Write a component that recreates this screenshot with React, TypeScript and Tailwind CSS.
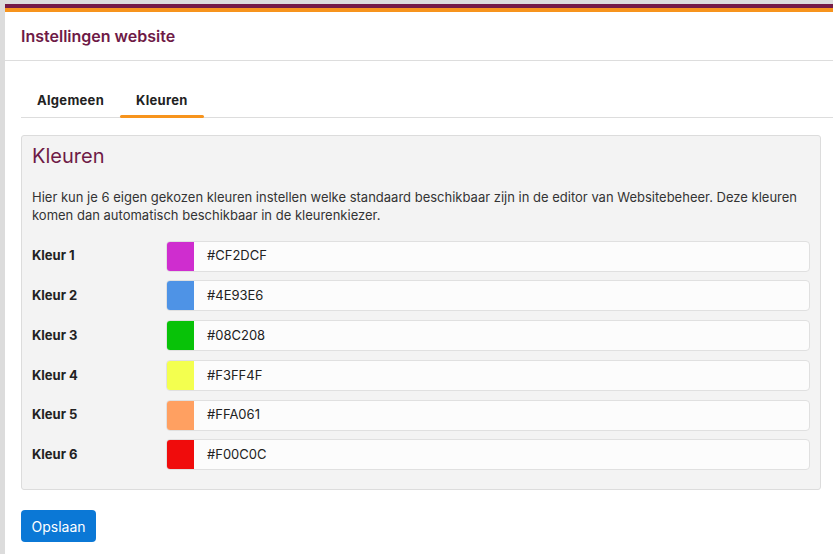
const colors = [
  { label: "Kleur 1", hex: "#CF2DCF" },
  { label: "Kleur 2", hex: "#4E93E6" },
  { label: "Kleur 3", hex: "#08C208" },
  { label: "Kleur 4", hex: "#F3FF4F" },
  { label: "Kleur 5", hex: "#FFA061" },
  { label: "Kleur 6", hex: "#F00C0C" },
];

export default function App() {
  return (
    <div className="min-h-[554px] bg-[#dcdcdc] pt-[4px] pl-[5px] font-['Inter','Noto_Sans',sans-serif] text-[#222]">
      <div className="min-h-[550px] bg-white">
        {/* ─── Top bars ─── */}
        <div className="h-[4px] bg-[#751a47]" />
        <div className="h-[4px] bg-[#f7941d]" />

        {/* ─── Header ─── */}
        <div className="flex h-[49px] items-center border-b border-[#dddddd] px-4">
          <h1 className="text-[16px] font-semibold text-[#6e1a46]">Instellingen website</h1>
        </div>

        {/* ─── Tabs ─── */}
        <div className="ml-4 mt-[30px] flex border-b border-[#dddddd]">
          <button className="px-4 pb-[6px] text-[13px] font-bold tracking-[0.3px] text-[#222]">Algemeen</button>
          <button className="relative px-4 pb-[6px] text-[13px] font-bold tracking-[0.3px] text-[#222]">
            Kleuren
            <span className="absolute bottom-[-1px] left-0 right-0 h-[3px] rounded-full bg-[#f7941d]" />
          </button>
        </div>

        {/* ─── Panel ─── */}
        <div className="ml-4 mr-3 mt-[17px] rounded-[3px] border border-[#dcdcdc] bg-[#f3f3f3] px-[10px] pb-[19px] pt-[8px]">
          <h2 className="text-[20px] leading-[24px] text-[#6e1a46]">Kleuren</h2>
          <p className="mt-[20px] text-[13px] leading-[18px] text-[#333]">
            Hier kun je 6 eigen gekozen kleuren instellen welke standaard beschikbaar zijn in de editor van Websitebeheer. Deze kleuren komen dan automatisch beschikbaar in de kleurenkiezer.
          </p>
          <div className="mt-[17px] flex flex-col gap-[8.8px]">
            {colors.map((c) => (
              <div key={c.label} className="flex items-center">
                <div className="w-[134px] text-[13px] font-bold text-[#222]">{c.label}</div>
                <div className="flex h-[31px] flex-1 items-stretch rounded-[4px] border border-[#e0e0e0] bg-[#fcfcfc]">
                  <div className="w-[27px] rounded-l-[3px]" style={{ backgroundColor: c.hex }} />
                  <div className="flex items-center pl-[13px] text-[13px] text-[#222]">{c.hex}</div>
                </div>
              </div>
            ))}
          </div>
        </div>

        {/* ─── Save ─── */}
        <div className="ml-4 mt-[20px] pb-3">
          <button className="h-[32px] w-[75px] rounded-[4px] bg-[#0b78d6] text-[14px] text-white">Opslaan</button>
        </div>
      </div>
    </div>
  );
}
